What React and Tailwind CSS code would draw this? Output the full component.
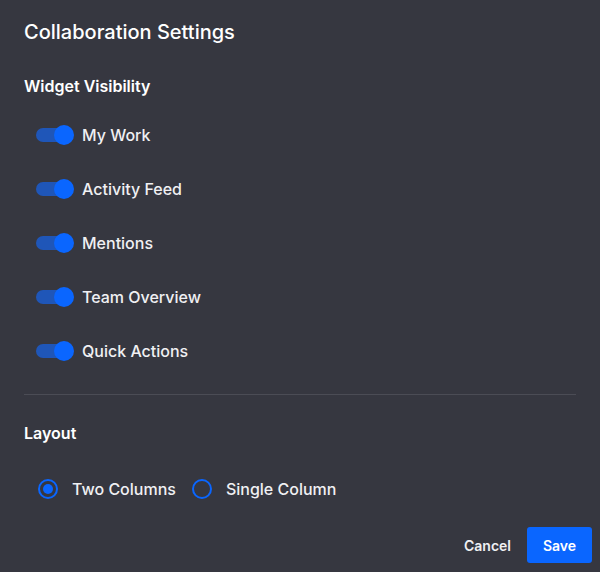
const widgets = ["My Work", "Activity Feed", "Mentions", "Team Overview", "Quick Actions"];

function Toggle() {
  return (
    <div className="relative w-[38px] h-[20px] flex items-center">
      <div className="w-[36px] h-[14px] rounded-full bg-[#1f56b8]" />
      <div className="absolute right-0 top-0 w-[20px] h-[20px] rounded-full bg-[#0a66ff]" />
    </div>
  );
}

function Radio({ checked, label }) {
  return (
    <div className="flex items-center gap-[14px]">
      <div className="w-[20px] h-[20px] rounded-full border-2 border-[#0a66ff] flex items-center justify-center">
        {checked && <div className="w-[10px] h-[10px] rounded-full bg-[#0a66ff]" />}
      </div>
      <span className="text-[16px] font-medium text-[#f0f0f3]">{label}</span>
    </div>
  );
}

export default function App() {
  return (
    <div
      className="w-[600px] h-[572px] bg-[#363740] text-white flex flex-col"
      style={{ fontFamily: "Inter, 'Liberation Sans', sans-serif" }}
    >
      <h1 className="text-[20px] font-medium px-6 pt-[19px] leading-[26px]">Collaboration Settings</h1>

      <div className="px-6 pt-[31px]">
        <h2 className="text-[16px] font-semibold leading-[20px]">Widget Visibility</h2>
        <div className="flex flex-col gap-[34px] pt-[29px] pl-[12px]">
          {widgets.map((w) => (
            <div key={w} className="flex items-center gap-[8px] h-[20px]">
              <Toggle />
              <span className="text-[16px] font-medium text-[#f0f0f3]">{w}</span>
            </div>
          ))}
        </div>
        <div className="border-t border-[#4b4c55] mt-[33px]" />
        <h2 className="text-[16px] font-semibold leading-[20px] pt-[28px]">Layout</h2>
        <div className="flex items-center gap-[16px] pl-[14px] pt-[34px]">
          <Radio checked label="Two Columns" />
          <Radio label="Single Column" />
        </div>
      </div>

      <div className="flex justify-end items-center gap-[16px] px-2 mt-auto mb-[9px]">
        <button className="text-[14px] font-semibold text-[#f0f0f3]">Cancel</button>
        <button className="h-[36px] w-[65px] rounded-[3px] bg-[#0a66ff] text-[14px] font-semibold">Save</button>
      </div>
    </div>
  );
}
